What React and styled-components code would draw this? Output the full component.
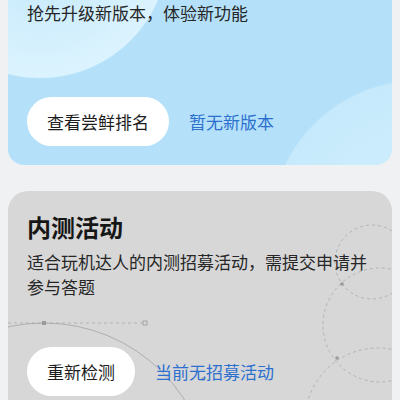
import React from 'react';
import styled, { createGlobalStyle } from 'styled-components';

const GlobalStyle = createGlobalStyle`
  html, body {
    margin: 0;
    padding: 0;
    background: #eff1f3;
  }
  body {
    font-family: 'Noto Sans CJK SC', 'Noto Sans', sans-serif;
    color: #1f1f1f;
  }
`;

const Page = styled.div`
  width: 400px;
  height: 400px;
  overflow: hidden;
  display: flex;
  flex-direction: column;
  gap: 26px;
  padding: 0 8px;
  box-sizing: border-box;
`;

const Card = styled.section`
  position: relative;
  overflow: hidden;
  flex-shrink: 0;
  padding: ${(p) => (p.$cut ? '0 19px 19px' : '20px 19px 19px')};
  border-radius: ${(p) => (p.$cut ? '0 0 16px 16px' : '20px 20px 0 0')};
  background: ${(p) => p.$bg};
`;

const Inner = styled.div`
  position: relative;
  z-index: 1;
`;

const Title = styled.h2`
  margin: 0;
  font-size: 24px;
  line-height: 32px;
  font-weight: 700;
  color: #161616;
`;

const Desc = styled.p`
  margin: ${(p) => (p.$top ? '6px 0 0' : '0')};
  font-size: 17px;
  line-height: 25px;
  color: #262626;
`;

const Actions = styled.div`
  display: flex;
  align-items: center;
  gap: 20px;
  margin-top: ${(p) => p.$space}px;
`;

const Pill = styled.button`
  height: 49px;
  padding: 0 20px;
  border: none;
  border-radius: 25px;
  background: #ffffff;
  font-family: inherit;
  font-size: 17px;
  color: #1c1c1c;
`;

const Link = styled.span`
  font-size: 17px;
  color: #2c70cf;
`;

const Deco = styled.svg`
  position: absolute;
  left: 0;
  top: 0;
  width: 384px;
  height: 260px;
  pointer-events: none;
`;

const blueBg = `
  radial-gradient(circle 130px at 32px -50px, #c3e8fb 0%, #dbf3fe 98%, transparent 99%),
  radial-gradient(circle 152px at 412px 230px, #d2effd 0%, #c6eafc 98%, transparent 99%),
  #b4e1f9
`;

function Grid() {
  return (
    <Deco viewBox="0 0 384 260">
      <g transform="translate(-8,-191)" fill="none" stroke="#a9a9a9" strokeWidth="0.8">
        <line x1="8" y1="323" x2="143" y2="323" strokeDasharray="3 3" />
        <circle cx="44" cy="490" r="167" stroke="#a3a3a3" />
        <circle cx="372" cy="262" r="37" strokeDasharray="3 3" />
        <circle cx="380" cy="325" r="57" strokeDasharray="3 3" />
        <circle cx="378" cy="421" r="73" strokeDasharray="3 3" />
        <rect x="42" y="321" width="4" height="4" fill="#9a9a9a" stroke="none" />
        <rect x="143" y="321" width="4" height="4" stroke="#9a9a9a" />
        <circle cx="342" cy="284" r="1.8" fill="#9a9a9a" stroke="none" />
        <circle cx="337" cy="358" r="1.8" fill="#9a9a9a" stroke="none" />
        <circle cx="203" cy="379" r="1.8" fill="#a0a0a0" stroke="none" />
      </g>
    </Deco>
  );
}

export default function App() {
  return (
    <>
      <GlobalStyle />
      <Page>
        <Card $cut $bg={blueBg}>
          <Inner>
            <Desc>抢先升级新版本，体验新功能</Desc>
            <Actions $space={72}>
              <Pill>查看尝鲜排名</Pill>
              <Link>暂无新版本</Link>
            </Actions>
          </Inner>
        </Card>
        <Card $bg="#d7d7d7">
          <Grid />
          <Inner>
            <Title>内测活动</Title>
            <Desc $top>适合玩机达人的内测招募活动，需提交申请并参与答题</Desc>
            <Actions $space={48}>
              <Pill>重新检测</Pill>
              <Link>当前无招募活动</Link>
            </Actions>
          </Inner>
        </Card>
      </Page>
    </>
  );
}
